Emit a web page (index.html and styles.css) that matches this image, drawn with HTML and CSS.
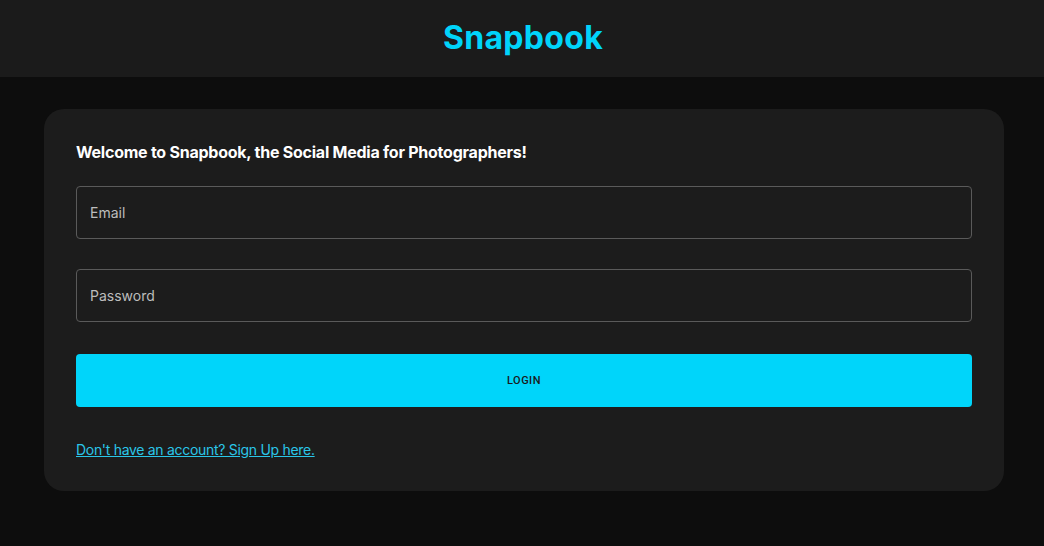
FILE: index.html
```html
<!DOCTYPE html>
<html lang="en">
<head>
<meta charset="utf-8">
<title>Snapbook</title>
<link rel="stylesheet" href="styles.css">
</head>
<body>
<header class="topbar">
  <h1 class="brand">Snapbook</h1>
</header>
<main class="page">
  <section class="card">
    <h2 class="welcome">Welcome to Snapbook, the Social Media for Photographers!</h2>
    <form class="form">
      <input class="field" type="email" placeholder="Email">
      <input class="field" type="password" placeholder="Password">
      <button class="login" type="button">LOGIN</button>
    </form>
    <a class="signup" href="#">Don't have an account? Sign Up here.</a>
  </section>
</main>
</body>
</html>
```
FILE: styles.css
```css
* { box-sizing: border-box; }
html, body { margin: 0; padding: 0; }
body {
  background: #0d0d0d;
  font-family: Roboto, "Liberation Sans", sans-serif;
  color: #fff;
  min-height: 546px;
}
.topbar {
  height: 77px;
  background: #1b1b1b;
  display: flex;
  align-items: center;
  justify-content: center;
}
.brand {
  margin: 0 0 3px 2px;
  font-family: Inter, Roboto, sans-serif;
  font-size: 32px;
  font-weight: 700;
  letter-spacing: 0.3px;
  color: #00d4fa;
}
.page {
  padding: 32px 40px 0 44px;
}
.card {
  width: 960px;
  background: #1c1c1c;
  border-radius: 20px;
  padding: 32px 32px 32px;
}
.welcome {
  margin: 0 0 23px;
  font-family: Inter, Roboto, sans-serif;
  font-size: 16px;
  font-weight: 700;
  line-height: 22px;
  letter-spacing: -0.24px;
  color: #fff;
}
.form {
  display: flex;
  flex-direction: column;
  gap: 30px;
}
.field {
  height: 53px;
  width: 100%;
  background: #1c1c1c;
  border: 1px solid #5a5a5a;
  border-radius: 4px;
  padding: 0 13px;
  font-family: Inter, Roboto, sans-serif;
  font-size: 14px;
  color: #fff;
  outline: none;
}
.field::placeholder { color: #bdbdbd; }
.form .login {
  margin-top: 2px;
  height: 53px;
  width: 100%;
  background: #00d5fa;
  border: none;
  border-radius: 4px;
  font-family: Roboto, sans-serif;
  font-size: 11px;
  font-weight: 500;
  letter-spacing: 0.5px;
  color: #1a1a1a;
}
.signup {
  display: inline-block;
  margin-top: 35px;
  font-family: Inter, Roboto, sans-serif;
  font-size: 14px;
  line-height: 16px;
  letter-spacing: -0.3px;
  color: #2ac6e8;
  text-decoration: underline;
}
```
